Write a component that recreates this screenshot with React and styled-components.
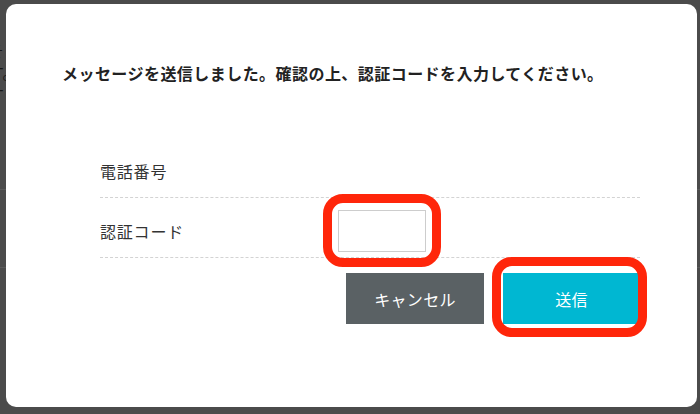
import React from 'react';
import styled, { createGlobalStyle } from 'styled-components';

const GlobalStyle = createGlobalStyle`
  html, body {
    margin: 0;
    padding: 0;
  }
  body {
    width: 700px;
    height: 414px;
    overflow: hidden;
    background: #4b4b4b;
    font-family: "Noto Sans CJK JP", "Noto Sans", sans-serif;
  }
`;

// dimmed page behind the dialog, only its left edge shows
const Backdrop = styled.div`
  height: 414px;
  box-sizing: border-box;
  padding-top: 39px;
  margin-left: -12px;
  color: #161616;
  font-size: 16px;
  line-height: 22px;
`;

const BackLine = styled.div`
  white-space: nowrap;
`;

const BackRule = styled.div`
  height: 0;
  border-top: 1px solid #5a5a5a;
  margin-top: ${(p) => p.$gap}px;
`;

const Modal = styled.div`
  position: absolute;
  top: 4px;
  left: 6px;
  width: 691px;
  height: 403px;
  box-sizing: border-box;
  padding: 57px 56px 0;
  background: #fff;
  border-radius: 10px;
`;

const Message = styled.p`
  margin: 0;
  font-size: 16px;
  line-height: 24px;
  font-weight: 700;
  letter-spacing: 0.45px;
  color: #222;
`;

const Form = styled.form`
  width: 540px;
  margin: 53px 0 0 38px;
`;

const Row = styled.div`
  display: flex;
  align-items: center;
  min-height: 42px;
  padding: 12px 0 5px;
  border-bottom: 1px dashed #d3d3d3;
`;

const Label = styled.label`
  width: 238px;
  font-size: 16px;
  letter-spacing: 0.8px;
  color: #333;
`;

const CodeInput = styled.input`
  display: block;
  width: 88px;
  height: 42px;
  box-sizing: border-box;
  margin: 0;
  border: 1px solid #cdcdcd;
  border-radius: 0;
  outline: none;
  background: #fff;
`;

// red annotation ring drawn over a control
const Marked = styled.span`
  position: relative;
  display: inline-flex;

  &::after {
    content: '';
    position: absolute;
    inset: ${(p) => p.$inset};
    border: 9px solid #ff260a;
    border-radius: 20px;
    pointer-events: none;
  }
`;

const Actions = styled.div`
  display: flex;
  justify-content: flex-end;
  gap: 19px;
  margin-top: 15px;
`;

const Button = styled.button`
  width: ${(p) => p.$width}px;
  height: 51px;
  margin: 0;
  padding: 0;
  border: none;
  border-radius: 0;
  background: ${(p) => (p.$primary ? '#00b7d2' : '#5a6164')};
  color: #fff;
  font-family: inherit;
  font-size: 16px;
  letter-spacing: 0.3px;
  cursor: pointer;
`;

export default function App() {
  return (
    <>
      <GlobalStyle />
      <Backdrop>
        <BackLine>そ</BackLine>
        <BackLine>す。</BackLine>
        <BackLine>す</BackLine>
        <BackRule $gap={84} />
        <BackRule $gap={77} />
      </Backdrop>
      <Modal>
        <Message>メッセージを送信しました。確認の上、認証コードを入力してください。</Message>
        <Form onSubmit={(e) => e.preventDefault()}>
          <Row>
            <Label>電話番号</Label>
          </Row>
          <Row>
            <Label htmlFor="code">認証コード</Label>
            <Marked $inset="-16px -15px -15px -15px">
              <CodeInput id="code" type="text" />
            </Marked>
          </Row>
          <Actions>
            <Button type="button" $width={138}>キャンセル</Button>
            <Marked $inset="-16px -7px -13px -11px">
              <Button type="submit" $width={137} $primary>送信</Button>
            </Marked>
          </Actions>
        </Form>
      </Modal>
    </>
  );
}
